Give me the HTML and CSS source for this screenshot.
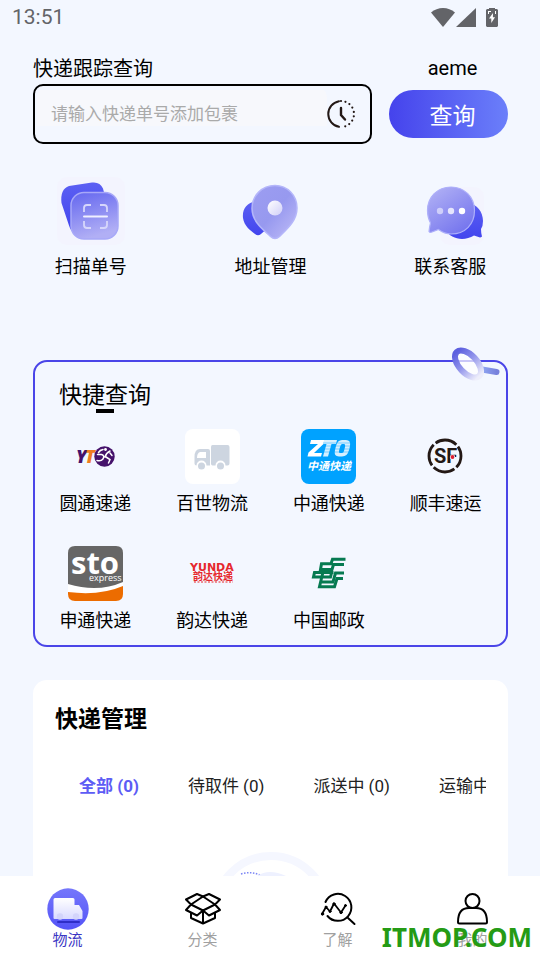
FILE: index.html
```html
<!DOCTYPE html>
<html lang="zh-CN">
<head>
    <meta charset="UTF-8">
    <meta name="viewport" content="width=device-width, initial-scale=1.0">
    <title>快递跟踪查询</title>
    <link rel="stylesheet" href="styles.css">
</head>
<body>
    <header class="status-bar">
        <span class="time">13:51</span>
        <div class="status-icons">
            <svg width="24" height="19" viewBox="0 0 24 19"><path d="M0 4.5C3.5 1.500 7.500 0 12 0s8.500 1.500 12 4.500L12 19z" fill="#636468"/></svg>
            <svg width="20" height="19" viewBox="0 0 20 19"><path d="M20 0v19H0z" fill="#636468"/></svg>
            <svg class="battery" width="12" height="19" viewBox="0 0 12 19"><path d="M3 1V0h6v1h2l1 1v16l-1 1H1l-1-1V2l1-1z" fill="#636468"/><path d="M7 5L3 10.500h2.300V15L9 9.200H6.900z" fill="#fff"/><path d="M2 3h3v1H3v2H2zM9 3h1v3H9z" fill="#fff"/></svg>
        </div>
    </header>

    <main>
        <!-- Search -->
        <form class="search">
            <div class="search-left">
                <label for="trackingNo">快递跟踪查询</label>
                <div class="search-box">
                    <input type="text" id="trackingNo" name="trackingNo" placeholder="请输入快递单号添加包裹">
                    <button type="button" class="history" aria-label="历史记录">
                        <svg width="28" height="28" viewBox="0 0 28 28" fill="none" stroke="#231815" stroke-width="2" stroke-linecap="round"><path d="M12 1.200A13 13 0 0 0 12 26.800"/><path d="M14 1A13 13 0 0 1 14 27" stroke-width="2.200" stroke-dasharray="0 4.530"/><path d="M14 8v7l4 4.500" stroke-width="2.400"/></svg>
                    </button>
                </div>
            </div>
            <div class="search-right">
                <span class="user">aeme</span>
                <button type="button" class="search-btn">查询</button>
            </div>
        </form>

        <!-- Shortcuts -->
        <nav class="actions">
            <a href="#scan">
                <svg width="68" height="68" viewBox="0 0 68 68">
                    <defs>
                        <linearGradient id="deep" x1="0" y1="0" x2="0" y2="1"><stop offset="0" stop-color="#5c60f3"/><stop offset="1" stop-color="#4245ee"/></linearGradient>
                        <linearGradient id="glass" x1="0" y1="0" x2=".3" y2="1"><stop offset="0" stop-color="#6366ef"/><stop offset="1" stop-color="#b1aff5"/></linearGradient>
                    </defs>
                    <rect width="68" height="68" rx="10" fill="#f3f4fe"/>
                    <path d="M12 9L35 5.500q8-1 11 6l10 39-41 3q-2-1-3-5L4.500 26Q3 12 12 9z" fill="url(#deep)"/>
                    <rect x="14" y="15.500" width="47" height="46.500" rx="13" fill="url(#glass)" stroke="#a7a8f8" stroke-width="1.500"/>
                    <path d="M27 35v-4q0-3 3-3h4M43 28h4q3 0 3 3v4M27 44v4q0 3 3 3h4M43 51h4q3 0 3-3v-4" fill="none" stroke="#d6d6fb" stroke-width="1.800"/>
                    <path d="M27 39.500h23" stroke="#f0f0ff" stroke-width="2" stroke-linecap="round"/>
                </svg>
                <span>扫描单号</span>
            </a>
            <a href="#address">
                <svg width="68" height="68" viewBox="0 0 68 68">
                    <defs>
                        <linearGradient id="pin" x1="0" y1="0" x2="1" y2="1"><stop offset="0" stop-color="#9c9df1"/><stop offset=".5" stop-color="#9799ef"/><stop offset="1" stop-color="#c0bdf7"/></linearGradient>
                        <linearGradient id="dot" x1="0" y1="0" x2="1" y2="1"><stop offset="0" stop-color="#fff"/><stop offset="1" stop-color="#d0cff8"/></linearGradient>
                    </defs>
                    <path d="M22 24C11 25 6 32 7 41c1 8 8 13 12 16q3 2.500 6 0c6-5 13-10 14-18 1-8-7-15-17-15z" fill="url(#deep)"/>
                    <path d="M39 8.500c-13 0-23 10-23 23 0 13 11 21 18.500 28q4.500 4 9 0C50.500 52.500 61 44 61 31c0-12.500-9.500-22.500-22-22.500z" fill="url(#pin)" stroke="#b4b6fa" stroke-width="1.500"/>
                    <circle cx="39" cy="31" r="7.500" fill="url(#dot)"/>
                </svg>
                <span>地址管理</span>
            </a>
            <a href="#service">
                <svg width="68" height="68" viewBox="0 0 68 68">
                    <defs>
                        <linearGradient id="bubble" x1="0" y1="0" x2=".7" y2="1"><stop offset="0" stop-color="#b5b5f5"/><stop offset="1" stop-color="#7575ee"/></linearGradient>
                    </defs>
                    <rect x="24" y="10" width="44" height="58" rx="10" fill="#f3f4fe"/>
                    <path d="M52 26c9 1 15 9 15 18q0 5-2 8 0 4 1 7.500-1 1-2 1l-6-2c-10 6-23 4-29-6z" fill="url(#deep)"/>
                    <path d="M35 10C21.500 10 11.500 20 11.500 33.500q0 7 3 12.500-1 4-1.500 8.500 1 1.500 3 .500l6.500-2.500q6 4.500 12.500 4.500C49.500 57 58.500 47 58.500 33.500S48.500 10 35 10z" fill="url(#bubble)" stroke="#aeb0fa" stroke-width="1.200"/>
                    <circle cx="24" cy="34" r="3.200" fill="#cfcffa"/><circle cx="35" cy="34" r="3.200" fill="#e6e6fd"/><circle cx="46" cy="34" r="3.200" fill="#fff"/>
                </svg>
                <span>联系客服</span>
            </a>
        </nav>

        <!-- Quick lookup by company -->
        <section class="quick">
            <svg class="magnifier" width="50" height="38" viewBox="0 0 50 38">
                <defs>
                    <linearGradient id="ring" x1="0" y1="0" x2="1" y2="0"><stop offset="0" stop-color="#5d60df"/><stop offset=".45" stop-color="#9194eb"/><stop offset="1" stop-color="#eeeefb"/></linearGradient>
                    <linearGradient id="handle" x1="0" y1="0" x2="1" y2="0"><stop offset="0" stop-color="#8fa6f2"/><stop offset="1" stop-color="#7781dc"/></linearGradient>
                </defs>
                <path d="M32 22.500l14.500 2.500" stroke="url(#handle)" stroke-width="6" stroke-linecap="round"/>
                <ellipse cx="18" cy="17" rx="16.500" ry="9" transform="rotate(47 18 17)" fill="#fff" fill-opacity=".7"/>
                <ellipse cx="18" cy="17" rx="16.500" ry="9" transform="rotate(47 18 17)" fill="none" stroke="url(#ring)" stroke-width="6"/>
            </svg>
            <h2>快捷查询</h2>
            <div class="companies">
                <a href="#yto">
                    <svg width="55" height="55" viewBox="0 0 55 55">
                        <text x="8" y="34" class="logo-yt" fill="#45126b">Y</text>
                        <text x="17" y="34" class="logo-yt" fill="#f07d22">T</text>
                        <circle cx="36.500" cy="27.500" r="10.200" fill="#45126b"/>
                        <path d="M35 20.500q-3 .5-4.500 3M29.500 25.500h4q3.500 1 1.500 4.500-2 2.500-6 1.500M42 22q-4 2-5 6M38 28l4 2.500-1.500 3.500M42 24l2 2.500" fill="none" stroke="#fff" stroke-width="1.500" stroke-linecap="round"/>
                        <circle cx="37.500" cy="20.500" r="1.400" fill="#fff"/>
                    </svg>
                    <span>圆通速递</span>
                </a>
                <a href="#best">
                    <svg width="55" height="55" viewBox="0 0 55 55">
                        <rect width="55" height="55" rx="8" fill="#fff"/>
                        <path d="M27.500 16h15q2 0 2 2v16.500q0 2-2 2h-2a5 5 0 0 0-10 0h-3q-1.500 0-1.500-2V18q0-2 1.500-2zM15 20h8q2 0 2 2v14.500h-3.500a5 5 0 0 0-10 0q-2 0-2-2V28q0-8 5.500-8z" fill="#cdd5e0"/>
                        <path d="M15 23h6v6h-9q0-5 3-6z" fill="#fff"/>
                        <circle cx="16.500" cy="37" r="3.500" fill="#cdd5e0"/><circle cx="35.500" cy="37" r="3.500" fill="#cdd5e0"/>
                    </svg>
                    <span>百世物流</span>
                </a>
                <a href="#zto">
                    <svg width="55" height="55" viewBox="0 0 55 55">
                        <rect width="55" height="55" rx="8" fill="#00a2ff"/>
                        <path d="M10 11h14l-1 3.500L13 24h8l-1 3.500H6.500l1-4L17 15H9z" fill="#fff"/>
                        <path d="M23 11h13l-1 4h-4.500L27 27.500h-5L25.500 15H22zM41 11h4q5 0 4 6l-1 4q-1.500 6.500-7 6.500h-3q-5.500 0-4-6.500l1-4q1.500-6 6-6zm0 4q-1 0-2 3l-1 4q-.5 2 1 2h2q1.500 0 2-2l1-4q.5-3-1-3z" fill="#d5efff"/>
                        <path d="M22 14h28M21 17h28M20 20h28M20 23h28" stroke="#00a2ff" stroke-opacity=".55" stroke-width=".8"/>
                        <text x="6" y="41" class="logo-zto">中通快递</text>
                    </svg>
                    <span>中通快递</span>
                </a>
                <a href="#sf">
                    <svg width="55" height="55" viewBox="0 0 55 55">
                        <circle cx="27" cy="27" r="16" fill="none" stroke="#231815" stroke-width="2.800" pathLength="100" stroke-dasharray="22.500 2.500" stroke-dashoffset="10"/>
                        <text x="16" y="34" class="logo-sf">SF</text>
                        <circle cx="34.500" cy="28" r="2.600" fill="#f3f7ff"/>
                        <circle cx="34.500" cy="28" r="1.900" fill="#dc1e32"/>
                    </svg>
                    <span>顺丰速运</span>
                </a>
                <a href="#sto">
                    <svg width="55" height="55" viewBox="0 0 55 55">
                        <rect width="55" height="55" rx="7" fill="#fff"/>
                        <path d="M7 0h41q7 0 7 7v29q-25 11-55 2V7q0-7 7-7z" fill="#666"/>
                        <path d="M0 46q32 4 55-6v8q0 7-7 7H7q-7 0-7-7z" fill="#ec6c00"/>
                        <text x="3" y="28" class="logo-sto">sto</text>
                        <text x="21" y="35" class="logo-express">express</text>
                    </svg>
                    <span>申通快递</span>
                </a>
                <a href="#yunda">
                    <svg width="55" height="55" viewBox="0 0 55 55">
                        <text x="5" y="25" class="logo-yunda">YUNDA</text>
                        <text x="8" y="34" class="logo-yunda-cn">韵达快递</text>
                        <path d="M9 36h39" stroke="#e6282d" stroke-width="1" stroke-dasharray="2 1.500"/>
                    </svg>
                    <span>韵达快递</span>
                </a>
                <a href="#post">
                    <svg width="55" height="55" viewBox="0 0 55 55" fill="none" stroke="#067a51" stroke-width="3">
                        <path d="M44.500 13.300H31.500L30 17.700H20.500L19.500 23.500H31L32.500 18.500H43"/>
                        <path d="M32.500 26.500H13.500L12.500 31H29.500L30.500 27M22 26L18.500 40.700H33.500L36 32.500H42"/>
                        <path d="M43 27H34.500L32 36H20.500"/>
                    </svg>
                    <span>中国邮政</span>
                </a>
            </div>
        </section>

        <!-- Parcel list -->
        <section class="manage">
            <h2>快递管理</h2>
            <div class="tabs">
                <button type="button" class="active">全部 (0)</button>
                <button type="button">待取件 (0)</button>
                <button type="button">派送中 (0)</button>
                <button type="button">运输中 (0)</button>
            </div>
            <svg class="empty" width="120" height="120" viewBox="0 0 120 120">
                <circle cx="60" cy="60" r="56" fill="none" stroke="#f5f7ff" stroke-width="8"/>
                <path d="M30 22q10-3 19 1" fill="none" stroke="#7b86f5" stroke-width="1.500" stroke-dasharray="1.500 1.500"/>
                <path d="M46 24q12-8 29 0l6 20H44z" fill="#eef1ff"/>
            </svg>
        </section>
    </main>

    <nav class="tab-bar">
        <a href="#logistics" class="active">
            <svg width="42" height="42" viewBox="0 0 42 42">
                <defs>
                    <linearGradient id="tab" x1="0" y1="0" x2="0" y2="1"><stop offset="0" stop-color="#7577fb"/><stop offset="1" stop-color="#5453f7"/></linearGradient>
                    <linearGradient id="truck" x1="0" y1="0" x2="0" y2="1"><stop offset="0" stop-color="#fff"/><stop offset="1" stop-color="#d9daff"/></linearGradient>
                </defs>
                <circle cx="21" cy="21" r="20.700" fill="url(#tab)"/>
                <rect x="10" y="33" width="23" height="2" rx="1" fill="#2f2ec7"/>
                <path d="M8 10h18q1.500 0 1.500 1.500V17H32l3.500 6v7q0 1-1 1H7.500Q6.500 31 6.500 30V11.500Q6.500 10 8 10z" fill="url(#truck)"/>
                <circle cx="13" cy="28.500" r="3.200" fill="#d3d4fb"/><circle cx="29" cy="28.500" r="3.200" fill="#d3d4fb"/>
            </svg>
            <span>物流</span>
        </a>
        <a href="#category">
            <svg width="42" height="42" viewBox="0 0 42 42" fill="none" stroke="#000" stroke-width="2" stroke-linejoin="round"><path d="M21 8.500L15 6 4 11.500l5 5L4 22l11 5.500 6-5 6 5L38 22l-5-5.500 5-5L27 6z"/><path d="M21 8.500L9 16.500l12 6 12-6zM9 24.500V30l12 5.500L33 30v-5.500M21 22.500v13"/></svg>
            <span>分类</span>
        </a>
        <a href="#learn">
            <svg width="42" height="42" viewBox="0 0 42 42" fill="none" stroke="#000" stroke-width="2" stroke-linecap="round" stroke-linejoin="round"><path d="M8.500 14a13.500 13.500 0 1 1 2 14M31 30l6.500 6"/><path d="M5 26l4-7 4 4.500 4-8 7 9 4.500-7" stroke-width="1.800"/><g fill="#000" stroke-width="1"><circle cx="5.500" cy="26" r="1.200"/><circle cx="9" cy="19" r="1"/><circle cx="13" cy="23.500" r="1"/><circle cx="17" cy="16" r="1.200"/><circle cx="24" cy="24.500" r="1.200"/><circle cx="28.500" cy="17.500" r="1"/></g></svg>
            <span>了解</span>
        </a>
        <a href="#mine">
            <svg width="42" height="42" viewBox="0 0 42 42" fill="none" stroke="#000" stroke-width="2" stroke-linejoin="round"><circle cx="20.500" cy="13" r="7"/><path d="M6 34q0-14 11-14h7q11 0 11 14 0 1.500-1.500 1.500H7.500Q6 35.500 6 34z"/></svg>
            <span>我的</span>
        </a>
        <strong class="watermark">ITMOP.COM</strong>
    </nav>
</body>
</html>
```
FILE: styles.css
```css
* {
    box-sizing: border-box;
}

body {
    display: flex;
    flex-direction: column;
    height: 100vh;
    margin: 0;
    font-family: Roboto, "Noto Sans CJK SC", sans-serif;
    color: #000;
    background-color: #f3f7ff;
    overflow: hidden;
}

a {
    color: inherit;
    text-decoration: none;
}

button {
    padding: 0;
    border: none;
    background: none;
    font-family: inherit;
    color: inherit;
    cursor: pointer;
}

svg {
    display: block;
    overflow: visible;
}

h2 {
    margin: 0;
    font-size: 23px;
    line-height: 34px;
    font-weight: normal;
}

/* Status bar */
.status-bar {
    display: flex;
    flex: none;
    justify-content: space-between;
    align-items: center;
    height: 36px;
    padding: 0 42px 2px 12px;
    color: #636468;
}

.time {
    font-size: 21px;
}

.status-icons {
    display: flex;
    gap: 1px;
}

.battery {
    margin-left: 9px;
}

main {
    flex: 1;
    min-height: 0;
    overflow: hidden;
}

/* Search */
.search {
    display: flex;
    gap: 17px;
    padding: 20px 32px 0 33px;
}

.search-left {
    flex: 1;
    min-width: 0;
}

.search-left label {
    display: block;
    height: 28px;
    font-size: 20px;
    line-height: 26px;
}

.search-box {
    display: flex;
    align-items: center;
    height: 60px;
    padding: 0 15px 0 2px;
    border: 2px solid #000;
    border-radius: 10px;
}

.search-box input {
    flex: 1;
    min-width: 0;
    height: 56px;
    padding: 0 14px;
    border: none;
    outline: none;
    border-radius: 12px;
    background: linear-gradient(#f7f8fc, #f7f8fc) 0 4px / 100% 36px no-repeat;
    font-family: inherit;
    font-size: 17px;
}

.search-box input::placeholder {
    color: #aaa;
}

.search-right {
    display: flex;
    flex-direction: column;
    width: 119px;
}

.user {
    padding-left: 8px;
    margin-bottom: 10px;
    font-size: 20px;
    line-height: 24px;
    text-align: center;
}

.search-btn {
    height: 48px;
    padding-left: 8px;
    border-radius: 24px;
    background: linear-gradient(90deg, #4543ec, #6b7ffa);
    font-size: 23px;
    color: #fff;
}

/* Shortcuts */
.actions {
    display: grid;
    grid-template-columns: repeat(3, 1fr);
    margin-top: 33px;
    padding-left: 1px;
}

.actions a,
.companies a {
    display: flex;
    flex-direction: column;
    align-items: center;
    font-size: 18px;
    line-height: 24px;
}

.actions a {
    gap: 10px;
}

/* Quick lookup */
.quick {
    position: relative;
    margin: 81px 32px 0 33px;
    padding: 17px 2px 12px;
    border: 2px solid #4a45e8;
    border-radius: 14px;
}

.quick h2 {
    position: relative;
    padding-left: 22px;
}

.quick h2::after {
    content: "";
    position: absolute;
    left: 59px;
    bottom: 0;
    width: 18px;
    height: 4px;
    background-color: #000;
}

.magnifier {
    position: absolute;
    top: -15px;
    right: 6px;
}

.companies {
    display: grid;
    grid-template-columns: repeat(4, 1fr);
    row-gap: 30px;
    margin-top: 16px;
}

.companies a {
    gap: 8px;
}

.logo-yt {
    font: italic 900 18px "Noto Sans", sans-serif;
}

.logo-zto {
    font: italic bold 11px "Noto Sans CJK SC", sans-serif;
    fill: #fff;
}

.logo-sf {
    font: bold 20px Roboto, sans-serif;
    fill: #231815;
}

.logo-sto {
    font: bold 31px "Open Sans", sans-serif;
    fill: #fff;
}

.logo-express {
    font: 9px "Open Sans", sans-serif;
    fill: #fff;
}

.logo-yunda {
    font: bold 11px "DejaVu Sans", sans-serif;
    fill: #e6282d;
}

.logo-yunda-cn {
    font: bold 10px "Noto Sans CJK SC", sans-serif;
    fill: #e6282d;
}

/* Parcel list */
.manage {
    margin: 33px 32px 0 33px;
    padding: 23px 22px 0;
    border-radius: 14px;
    background-color: #fff;
}

.manage h2 {
    font-weight: bold;
}

.tabs {
    display: flex;
    gap: 1px;
    margin-top: 37px;
    overflow: hidden;
}

.tabs button {
    flex: none;
    padding: 0 24px;
    font-size: 17px;
    line-height: 24px;
    color: #222;
}

.tabs .active {
    font-weight: bold;
    color: #5d5cf5;
}

.empty {
    margin: 54px auto 0;
}

/* Bottom tab bar */
.tab-bar {
    position: relative;
    display: grid;
    flex: none;
    grid-template-columns: repeat(4, 1fr);
    height: 84px;
    padding-top: 12px;
    background-color: #fff;
}

.tab-bar a {
    display: flex;
    flex-direction: column;
    align-items: center;
    font-size: 15px;
    line-height: 20px;
    color: #a0a0a0;
}

.tab-bar .active {
    color: #3a36c4;
}

.watermark {
    position: absolute;
    right: 8px;
    bottom: 6px;
    font-family: "Noto Sans", sans-serif;
    font-size: 26px;
    line-height: 34px;
    color: #259b15;
}
```
